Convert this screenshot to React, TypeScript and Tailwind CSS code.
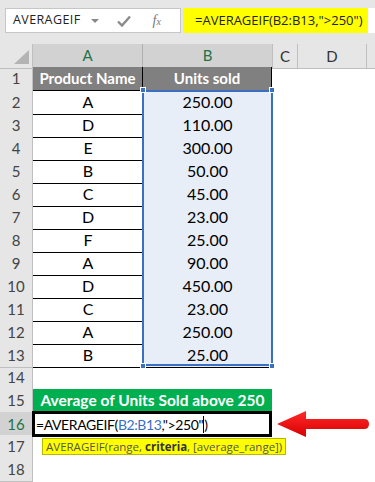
import React from "react";

const rows: [string, string][] = [
  ["A", "250.00"],
  ["D", "110.00"],
  ["E", "300.00"],
  ["B", "50.00"],
  ["C", "45.00"],
  ["D", "23.00"],
  ["F", "25.00"],
  ["A", "90.00"],
  ["D", "450.00"],
  ["C", "23.00"],
  ["A", "250.00"],
  ["B", "25.00"],
];

const grid = "grid grid-cols-[33px_110px_129px_26px_69px_1fr] h-[23px]";

const RowNum = ({ n, active }: { n: number; active?: boolean }) => (
  <div
    className={
      "flex items-center justify-center border-r border-b border-[#bfbfbf] text-[15px] " +
      (active ? "bg-[#d2d2d2] text-[#217346]" : "bg-[#e6e6e6] text-[#444]")
    }
  >
    {n}
  </div>
);

const Handle = ({ pos }: { pos: string }) => (
  <span className={"absolute w-[6px] h-[6px] bg-[#3a6fc4] border border-white z-20 " + pos} />
);

export default function App() {
  return (
    <div className="relative w-[375px] h-[482px] overflow-hidden bg-white font-['Lato','Liberation_Sans',sans-serif] text-black">
      {/* formula bar */}
      <div className="h-[44px] bg-[#e6e6e6] flex items-start pt-[8px] pl-[5px]">
        <div className="h-[25px] w-[176px] bg-white border border-[#c6c6c6] flex items-center font-['Open_Sans',sans-serif]">
          <span className="pl-[7px] text-[12.5px] text-[#222] tracking-[0.4px]">AVERAGEIF</span>
          <span className="ml-[10px] w-0 h-0 border-l-[4px] border-r-[4px] border-t-[4px] border-l-transparent border-r-transparent border-t-[#888]" />
          <svg className="ml-[18px]" width="14" height="12" viewBox="0 0 14 12">
            <path d="M1 6.5 L5 10.5 L13 1.5" fill="none" stroke="#8a8a8a" strokeWidth="2.4" />
          </svg>
          <span className="ml-[22px] text-[14px] italic text-[#777] font-['Liberation_Serif',serif]">
            f<span className="text-[10px]">x</span>
          </span>
        </div>
        <div className="ml-[2px] h-[25px] flex-1 bg-white flex items-center">
          <div className="h-full w-[185px] bg-[#ffff00] flex items-center pl-[12px] text-[13px] text-[#222] font-['Open_Sans',sans-serif]">
            =AVERAGEIF(B2:B13,"&gt;250")
          </div>
        </div>
      </div>

      {/* column headers */}
      <div className={grid}>
        <div className="relative bg-[#e6e6e6] border-r border-b border-[#bfbfbf]">
          <svg className="absolute right-[3px] bottom-[4px]" width="15" height="14" viewBox="0 0 15 14">
            <path d="M15 0 L15 14 L0 14 Z" fill="#b4b4b4" />
          </svg>
        </div>
        <div className="flex items-center justify-center bg-[#d2d2d2] border-r border-[#b0b0b0] border-b-2 border-b-[#217346] text-[15px] text-[#217346]">A</div>
        <div className="flex items-center justify-center bg-[#d2d2d2] border-b-2 border-b-[#217346] text-[15px] text-[#217346]">B</div>
        <div className="flex items-center justify-center bg-[#e6e6e6] border-x border-b border-[#bfbfbf] text-[15px] text-[#333]">C</div>
        <div className="flex items-center justify-center bg-[#e6e6e6] border-r border-b border-[#bfbfbf] text-[15px] text-[#333]">D</div>
        <div className="bg-[#e6e6e6] border-b border-[#bfbfbf]" />
      </div>

      {/* row 1 */}
      <div className={grid}>
        <RowNum n={1} />
        <div className="flex items-center justify-center bg-[#808080] border-r border-b border-black text-white font-bold text-[15px]">Product Name</div>
        <div className="flex items-center justify-center bg-[#808080] border-r border-b border-black text-white font-bold text-[15px]">Units sold</div>
        <div />
        <div />
        <div />
      </div>

      {/* data rows with range outline */}
      <div className="relative">
        {rows.map(([p, u], i) => (
          <div key={i} className={grid}>
            <RowNum n={i + 2} />
            <div className="flex items-center justify-center border-b border-black text-[16px]">{p}</div>
            <div className="flex items-center justify-center bg-[#e8eef8] border-b border-black text-[16px]">{u}</div>
            <div />
            <div />
            <div />
          </div>
        ))}
        <div className="absolute left-[142px] top-0 w-[131px] h-[276px] border-2 border-[#3a6fc4] pointer-events-none z-10" />
        <Handle pos="left-[140px] top-[-3px]" />
        <Handle pos="left-[269px] top-[-3px]" />
        <Handle pos="left-[140px] top-[273px]" />
        <Handle pos="left-[269px] top-[273px]" />
      </div>

      {/* row 14 */}
      <div className={grid}>
        <RowNum n={14} />
      </div>

      {/* row 15 */}
      <div className={grid}>
        <RowNum n={15} />
        <div className="col-span-2 flex items-center justify-center bg-[#00b050] text-white font-bold text-[15.5px]">
          Average of Units Sold above 250
        </div>
      </div>

      {/* row 16 */}
      <div className={grid}>
        <RowNum n={16} active />
        <div className="col-span-2 relative -ml-[1px] -mt-[1px] h-[26px] border-[3px] border-black bg-white flex items-center pl-[1px] text-[14px] tracking-[-0.4px] z-10">
          <span>=AVERAGEIF(</span>
          <span className="text-[#3a6fc4]">B2:B13</span>
          <span>,"&gt;250"</span>
          <span className="inline-block w-[1px] h-[17px] bg-black" />
          <span>)</span>
        </div>
      </div>

      {/* rows 17, 18 */}
      <div className={grid}>
        <RowNum n={17} />
      </div>
      <div className={grid}>
        <RowNum n={18} />
      </div>

      {/* tooltip */}
      <div className="absolute left-[42px] top-[438px] h-[17px] px-[3px] flex items-center whitespace-pre bg-[#ffff00] border border-[#b8b800] text-[11.5px] text-[#555] font-['Open_Sans',sans-serif] z-20">
        {"AVERAGEIF(range, "}<b className="text-[#333]">criteria</b>{", [average_range])"}
      </div>

      {/* red arrow */}
      <svg className="absolute left-[276px] top-[409px] z-20" width="96" height="32" viewBox="0 0 96 32">
        <defs>
          <linearGradient id="ar" x1="0" y1="0" x2="0" y2="1">
            <stop offset="0" stopColor="#ff2a2a" />
            <stop offset="1" stopColor="#d80000" />
          </linearGradient>
        </defs>
        <path
          d="M1 15 L30 2 L30 10 L88 10 Q93 10 93 15 Q93 20 88 20 L30 20 L30 28 Z"
          fill="url(#ar)"
        />
      </svg>
    </div>
  );
}
